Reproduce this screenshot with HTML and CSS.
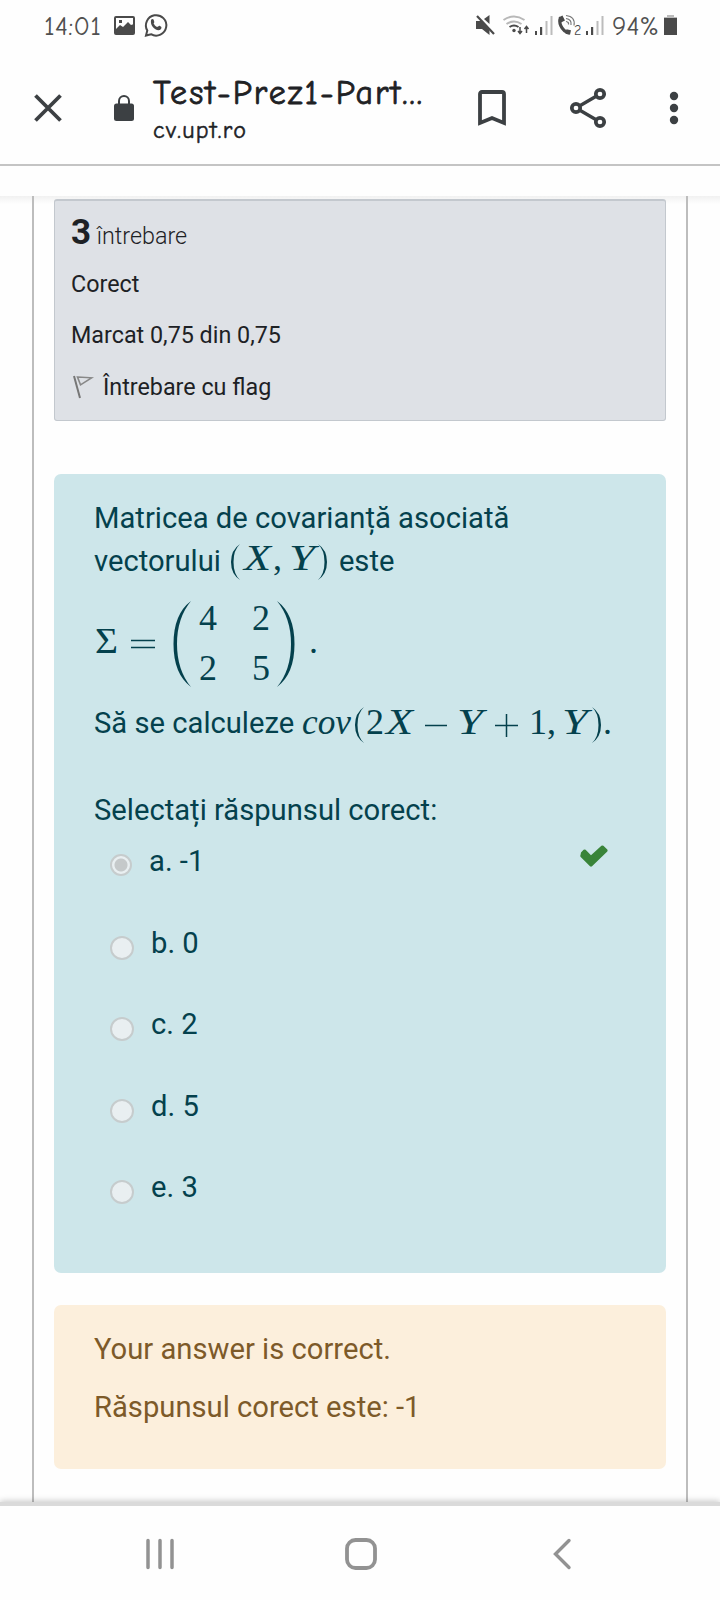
FILE: index.html
```html
<!DOCTYPE html>
<html lang="ro">
<head>
<meta charset="utf-8">
<title>Test-Prez1</title>
<link rel="stylesheet" href="styles.css">
</head>
<body>
<header class="statusbar">
  <svg width="720" height="52" viewBox="0 0 720 52">
    <g class="hand status-text">
      <text x="44" y="35" textLength="57" lengthAdjust="spacing">14:01</text>
      <text x="612" y="35" textLength="47" lengthAdjust="spacingAndGlyphs">94%</text>
    </g>
    <g fill="none" stroke="#4a4a4a" stroke-width="2">
      <rect x="115" y="17" width="19" height="17" rx="1"/>
      <path d="M146 35.500L147.300 30.500A10.200 10.200 0 1 1 151 34.200Z"/>
    </g>
    <path fill="#4a4a4a" d="M116 29l4-4 3 2 5-5 3 3 3-1v10h-18zM119 20h3v3h-3z"/>
    <path fill="#4a4a4a" d="M151 20c1-2 3-1 3 1 1 2-1 2 0 3 1 2 2 2 3 3 1 0 2-2 3-1 2 1 2 2 0 4-5 1-10-4-9-10z"/>
    <path fill="#4a4a4a" d="M476 21h5l8.500 9v5l-7.500-6h-6zM484 19l5.500-4v9z"/>
    <path stroke="#4a4a4a" stroke-width="2.200" d="M477 16l17 18"/>
    <g fill="none" stroke="#b8b8b8" stroke-width="2"><path d="M503.500 20q10.500-7 21 0M506.500 24q7.500-5 15 0"/></g>
    <path fill="none" stroke="#4a4a4a" stroke-width="2" d="M509.500 27q4.500-3 9 0"/>
    <circle cx="514" cy="30.500" r="1.700" fill="#4a4a4a"/>
    <path fill="none" stroke="#4a4a4a" stroke-width="1.500" d="M520 27v6M518 31l2 2.500 2-2.500M526.500 33v-6M524.500 29l2-2.500 2 2.500"/>
    <path fill="#4a4a4a" d="M535 31h2v4h-2zM540 27h2.200v8H540zM586 31h2v4h-2zM591 27h2.200v8H591z"/>
    <path fill="#bcbcbc" d="M545.500 21h2v14h-2zM550.500 16h2v19h-2zM596.500 21h2v14h-2zM601.500 16h2v19h-2z"/>
    <path fill="none" stroke="#4a4a4a" stroke-width="3.200" d="M561 17.500c-3 4 0 13 8 15.500"/>
    <path fill="none" stroke="#4a4a4a" stroke-width="4.400" d="M560.500 16.500l2.500 5M566 31.500l4.500 1"/>
    <g fill="none" stroke="#777" stroke-width="1.200"><path d="M566 15.500q9.500 1 8 10M566 18.500q6 1 5 6.500M566 21.500q3 .500 2.500 3"/></g>
    <text class="hand sim" x="574" y="35">2</text>
    <path fill="#4a4a4a" d="M664 18h13v17h-13z"/><path fill="#bcbcbc" d="M667 15h7v2h3v1h-13v-1h3z"/>
  </svg>
</header>
<nav class="toolbar">
  <svg class="close" width="28" height="28" viewBox="0 0 28 28"><path d="M1.500 1.500l25 25M26.500 1.500l-25 25" stroke="#3c4043" stroke-width="3.800"/></svg>
  <svg class="lock" width="20" height="26" viewBox="0 0 20 26"><rect y="8.500" width="20" height="17.500" rx="2.500" fill="#3c4043"/><path d="M5 10V6a5 5 0 0 1 10 0v4" fill="none" stroke="#3c4043" stroke-width="2"/></svg>
  <svg class="titles" width="280" height="80" viewBox="0 0 280 80">
    <text class="hand title" x="0" y="36" textLength="269" lengthAdjust="spacing">Test-Prez1-Part...</text>
    <text class="hand host" x="0" y="70" textLength="93" lengthAdjust="spacing">cv.upt.ro</text>
  </svg>
  <svg class="bookmark" width="28" height="36" viewBox="0 0 28 36"><path d="M2 33V4q0-2 2-2h20q2 0 2 2v29l-12-5z" fill="none" stroke="#3c4043" stroke-width="3.800"/></svg>
  <svg class="share" width="36" height="40" viewBox="0 0 36 40"><path d="M30 6L6 20l24 14" fill="none" stroke="#3c4043" stroke-width="3.400"/><g fill="#fff" stroke="#3c4043" stroke-width="3.700"><circle cx="30" cy="6" r="4.200"/><circle cx="6" cy="20" r="4.200"/><circle cx="30" cy="34" r="4.200"/></g></svg>
  <svg class="more" width="8" height="32" viewBox="0 0 8 32"><g fill="#3c4043"><circle cx="4" cy="4" r="4.200"/><circle cx="4" cy="16" r="4.200"/><circle cx="4" cy="28" r="4.200"/></g></svg>
</nav>
<main class="page">
  <div class="sheet">
    <section class="info">
      <h3 class="qno"><b>3</b> <span>întrebare</span></h3>
      <p class="state">Corect</p>
      <p class="grade">Marcat 0,75 din 0,75</p>
      <p class="flag"><svg width="20" height="24" viewBox="0 0 20 24"><path d="M1 1l6 22" stroke="#777" stroke-width="2" fill="none"/><path d="M4.500 2l14 .8-11 7z" stroke="#888" stroke-width="1.600" fill="none"/></svg>Întrebare cu flag</p>
    </section>
    <section class="question">
      <p class="line l1">Matricea de covarianță asociată</p>
      <div class="row r2">
        <span class="line">vectorului</span>
        <svg class="math" width="98" height="42" viewBox="230 540 98 42">
          <path class="bracket" d="M240 544Q231 550 231 562T240 580Q233.500 574 233.500 562T240 544ZM318 544Q327 550 327 562T318 580Q324.500 574 324.500 562T318 544Z"/>
          <text class="it" x="244" y="570" textLength="27" lengthAdjust="spacingAndGlyphs">X</text><text x="273" y="570">,</text><text class="it" x="289" y="570" textLength="26" lengthAdjust="spacingAndGlyphs">Y</text>
        </svg>
        <span class="line">este</span>
      </div>
      <svg class="math matrix" width="230" height="90" viewBox="95 598 230 90">
        <text x="96" y="652" textLength="23" lengthAdjust="spacingAndGlyphs">Σ</text>
        <path d="M132 639.500h24M132 646.500h24" stroke="#04414d" stroke-width="1.400"/>
        <path class="bracket" d="M192 600Q174.500 613 174.500 643T192 686Q178 669 178 643T192 600ZM278 600Q295.500 613 295.500 643T278 686Q292 669 292 643T278 600Z"/>
        <text x="200" y="629">4</text><text x="253" y="629">2</text>
        <text x="200" y="679">2</text><text x="253" y="679">5</text>
        <text x="310" y="652">.</text>
      </svg>
      <div class="row r4">
        <span class="line">Să se calculeze</span>
        <svg class="math" width="315" height="46" viewBox="300 702 315 46">
          <path class="bracket" d="M364 706Q355 712 355 724T364 742Q357.500 736 357.500 724T364 706ZM592 706Q601 712 601 724T592 742Q598.500 736 598.500 724T592 706Z"/>
          <text class="it" x="302" y="733" textLength="49" lengthAdjust="spacingAndGlyphs">cov</text><text x="366" y="733">2</text><text class="it" x="386" y="733" textLength="27" lengthAdjust="spacingAndGlyphs">X</text>
          <path d="M425 724.500h22M495 724.500h23M506.500 713v23" stroke="#04414d" stroke-width="1.500"/>
          <text class="it" x="457" y="733" textLength="26" lengthAdjust="spacingAndGlyphs">Y</text><text x="529" y="733">1</text><text x="547" y="733">,</text><text class="it" x="562" y="733" textLength="26" lengthAdjust="spacingAndGlyphs">Y</text><text x="603" y="733">.</text>
        </svg>
      </div>
      <p class="line prompt">Selectați răspunsul corect:</p>
      <ul class="answers">
        <li class="chosen"><i class="radio on"></i><span>a. -1</span><svg class="check" width="28" height="22" viewBox="0 0 28 22"><path d="M1 7.500L3.600 4.800Q4.600 4 5.600 4.800L11 10.200 21.400.8Q22.400 0 23.400.8L27.300 4.600Q28 5.500 27.300 6.500L12 21.300Q11 22 10 21.300L.7 12Q-.2 11 .5 10Z" fill="#398439"/></svg></li>
        <li><i class="radio"></i><span>b. 0</span></li>
        <li><i class="radio"></i><span>c. 2</span></li>
        <li><i class="radio"></i><span>d. 5</span></li>
        <li><i class="radio"></i><span>e. 3</span></li>
      </ul>
    </section>
    <section class="feedback">
      <p>Your answer is correct.</p>
      <p class="right">Răspunsul corect este: -1</p>
    </section>
  </div>
</main>
<footer class="sysnav">
  <svg width="28" height="30" viewBox="0 0 28 30"><path d="M2 1.500v27M14 1.500v27M26 1.500v27" stroke="#929292" stroke-width="3.500" stroke-linecap="round"/></svg>
  <svg width="32" height="32" viewBox="0 0 32 32"><rect x="2" y="2" width="28" height="28" rx="8.500" fill="none" stroke="#929292" stroke-width="3.800"/></svg>
  <svg width="18" height="30" viewBox="0 0 18 30"><path d="M15 1.500L1.500 15 15 28.500" fill="none" stroke="#929292" stroke-width="3.400" stroke-linecap="round"/></svg>
</footer>
</body>
</html>
```
FILE: styles.css
```css
* { box-sizing: border-box; margin: 0; padding: 0; }
body { width: 720px; height: 1600px; overflow: hidden; background: #fefefe; font-family: Roboto, sans-serif; display: flex; flex-direction: column; }
svg { display: block; flex: none; overflow: visible; }
p, span, h3 { white-space: nowrap; }

.hand { font-family: "Comic Neue", "Comic Sans MS", "Noto Sans", sans-serif; fill: #202124; }
.status-text { font-size: 27px; fill: #505050; }
.sim { font-size: 14px; fill: #4a4a4a; }
.title { font-size: 34px; stroke: #202124; stroke-width: .8px; }
.host { font-size: 24px; stroke: #202124; stroke-width: .5px; }

.statusbar { height: 52px; flex: none; }
.toolbar { height: 114px; flex: none; display: flex; align-items: center; border-bottom: 2px solid #c4c4c4; padding-left: 34px; }
.lock { margin-left: 52px; }
.titles { margin-left: 19px; }
.bookmark { margin-left: 45px; }
.share { margin-left: 64px; }
.more { margin-left: 64px; }

.page { flex: 1; margin-top: 30px; padding: 0 32px; background: linear-gradient(#f1f1f1, #fefefe 8px); }
.sheet { height: 100%; border: solid #bdbdbd; border-width: 0 2px; padding: 3px 20px 0; }

.info { height: 222px; background: #dee1e6; border: 1px solid #c3c8ce; border-top-width: 2px; border-radius: 3px; padding: 0 16px; color: #1d2125; font-size: 23.300px; line-height: 30px; }
.qno { font-weight: 300; font-size: 23.300px; line-height: 40px; padding-top: 12px; }
.qno b { font-size: 35px; font-weight: 700; }
.state { margin-top: 13px; }
.grade { margin-top: 21px; }
.flag { margin-top: 22px; display: flex; align-items: center; gap: 10px; }
.flag svg { margin-left: 2px; }

.question { height: 799px; margin-top: 53px; background: #cde6ea; border-radius: 7px; padding: 26px 40px 0 40px; color: #04414d; font-size: 29.200px; }
.line { line-height: 36px; }
.row { display: flex; align-items: flex-start; }
.r2 { height: 59px; margin-top: 5px; }
.r2 .line { padding-top: 2px; }
.r2 .math { margin: -1px 0 0 9px; }
.r2 .math + .line { margin-left: 11px; }
.math { font-family: "Liberation Serif", serif; font-size: 36px; fill: #04414d; }
.matrix { margin-top: -1px; }
.it { font-style: italic; }
.r4 { height: 46px; margin-top: 14px; }
.r4 .line { padding-top: 2px; }
.r4 .math { margin-left: 6px; }
.prompt { margin-top: 43px; }
.answers { list-style: none; padding-left: 16px; margin-top: 15px; }
.answers li { height: 81.500px; display: flex; align-items: flex-start; line-height: 36px; }
.radio { width: 24px; height: 24px; border: 2px solid #c6cccd; border-radius: 50%; background: #e9eff1; margin-top: 11px; flex: none; }
.answers span { margin-left: 17px; }
.answers .on { width: 22px; height: 22px; background: radial-gradient(circle, #c5c9ca 6px, #e9eff1 7px); }
.chosen span { margin-left: 17px; width: 431px; }
.check { margin-top: 2px; }

.feedback { height: 164px; margin-top: 32px; background: #fcefdc; border-radius: 7px; padding: 26px 40px; color: #7d5a29; font-size: 29.200px; line-height: 36px; }
.right { margin-top: 22px; }

.sysnav { height: 98px; flex: none; border-top: 4px solid #dadada; box-shadow: 0 -1px 6px rgba(0,0,0,.22); background: #fefefe; display: flex; align-items: flex-start; padding: 33px 0 0 146px; }
.sysnav svg + svg { margin: -1px 0 0 171px; }
.sysnav svg + svg + svg { margin: 0 0 0 177px; }
```
